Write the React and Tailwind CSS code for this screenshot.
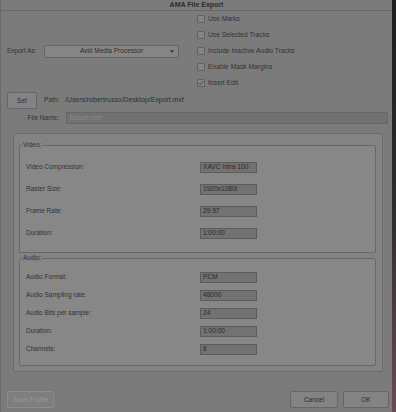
import React from "react";

const videoRows = [
  ["Video Compression:", "XAVC Intra 100"],
  ["Raster Size:", "1920x1080i"],
  ["Frame Rate:", "29.97"],
  ["Duration:", "1:00:00"],
];

const audioRows = [
  ["Audio Format:", "PCM"],
  ["Audio Sampling rate:", "48000"],
  ["Audio Bits per sample:", "24"],
  ["Duration:", "1:00:00"],
  ["Channels:", "8"],
];

const options = [
  ["Use Marks", false],
  ["Use Selected Tracks", false],
  ["Include Inactive Audio Tracks", false],
  ["Enable Mask Margins", false],
  ["Insert Edit", true],
];

function Checkbox({ label, checked }) {
  return (
    <div className="h-[16px] flex items-center">
      <span className="w-[8px] h-[8px] border border-[#626262] bg-[#848484] rounded-[1px] flex items-center justify-center">
        {checked && (
          <svg viewBox="0 0 8 8" className="w-[6px] h-[6px]">
            <path d="M1 4.2l2 2L7 1.5" fill="none" stroke="#4a4a4a" strokeWidth="1.2" />
          </svg>
        )}
      </span>
      <span className="ml-[3px] text-[6.7px] text-[#333]">{label}</span>
    </div>
  );
}

function ValueRow({ label, value, h }) {
  return (
    <div className={`${h} flex items-center`}>
      <span className="w-[180px] pl-[6px] text-[6.5px] text-[#333]">{label}</span>
      <span className="w-[57px] h-[11px] border border-[#5c5c5c] bg-[#727272] flex items-center pl-[2px] text-[6.6px] text-[#2a2a2a]">
        {value}
      </span>
    </div>
  );
}

function Group({ title, children, pt }) {
  return (
    <div className={`relative w-[357px] h-[108px] border border-[#686868] rounded-[2px] bg-[#878787] ${pt}`}>
      <span className="absolute -top-[5px] left-[2px] px-[1px] bg-[#858585] text-[6.5px] leading-[8px] text-[#333]">
        {title}
      </span>
      {children}
    </div>
  );
}

function Button({ children, className = "", disabled }) {
  return (
    <div
      className={`h-[17px] flex items-center justify-center border rounded-[2px] text-[6.5px] ${
        disabled ? "border-[#8c8c8c] text-[#9a9a9a] bg-[#7e7e7e]" : "border-[#666] text-[#2e2e2e] bg-[#838383]"
      } ${className}`}
    >
      {children}
    </div>
  );
}

export default function App() {
  return (
    <div className="w-[396px] h-[412px] flex font-['Liberation_Sans',Arial,sans-serif] overflow-hidden">
      <div className="w-[392px] h-full bg-[#7b7b7b] flex flex-col border-l border-[#6a6a6a]">
        <div className="h-[11px] shrink-0 border-b border-[#686868] flex items-center justify-center text-[7px] font-bold text-[#2b2b2b]">
          AMA File Export
        </div>

        <div className="h-[80px] shrink-0 flex">
          <div className="w-[196px] pl-[6px] flex items-center">
            <span className="w-[37px] text-[6.5px] text-[#333]">Export As:</span>
            <div className="w-[135px] h-[13px] border border-[#656565] rounded-[2px] bg-[#858585] flex items-center relative">
              <span className="flex-1 text-center text-[6.5px] text-[#2e2e2e]">Avid Media Processor</span>
              <svg viewBox="0 0 6 4" className="absolute right-[4px] w-[4px] h-[3px]">
                <path d="M0 0h6L3 4z" fill="#333" />
              </svg>
            </div>
          </div>
          <div className="flex flex-col">
            {options.map(([label, checked]) => (
              <Checkbox key={label} label={label} checked={checked} />
            ))}
          </div>
        </div>

        <div className="mt-[3px] h-[13px] shrink-0 flex items-center">
          <Button className="ml-[6px] w-[30px] h-[13px]">Set</Button>
          <span className="ml-[7px] w-[21px] text-[6.7px] text-[#333]">Path:</span>
          <span className="text-[6.9px] text-[#2e2e2e]">/Users/robertrusso/Desktop/Export.mxf</span>
        </div>

        <div className="mt-[5px] h-[12px] shrink-0 flex items-center">
          <span className="w-[58px] text-right text-[6.5px] text-[#333]">File Name:</span>
          <div className="ml-[7px] w-[322px] h-[12px] border border-[#666] bg-[#717171] flex items-center pl-[3px] text-[6.5px] text-[#8a8a8a]">
            Export.mxf
          </div>
        </div>

        <div className="mt-[9px] ml-[12px] w-[370px] h-[239px] shrink-0 border border-[#6c6c6c] rounded-[2px] bg-[#838383] pt-[11px] pl-[5px]">
          <Group title="Video:" pt="pt-[10px]">
            {videoRows.map(([l, v]) => (
              <ValueRow key={l} label={l} value={v} h="h-[22px]" />
            ))}
          </Group>
          <div className="mt-[5px]">
            <Group title="Audio:" pt="pt-[9px]">
              {audioRows.map(([l, v]) => (
                <ValueRow key={l} label={l} value={v} h="h-[18px]" />
              ))}
            </Group>
          </div>
        </div>

        <div className="mt-[19px] flex items-center">
          <Button disabled className="ml-[6px] w-[47px]">Save Profile</Button>
          <Button className="ml-auto w-[48px]">Cancel</Button>
          <Button className="ml-[5px] mr-[3px] w-[46px]">OK</Button>
        </div>
      </div>
      <div className="w-[4px] h-full bg-linear-to-b from-[#1e1e1e] via-[#2c2c2c] to-[#6b4a56]" />
    </div>
  );
}
